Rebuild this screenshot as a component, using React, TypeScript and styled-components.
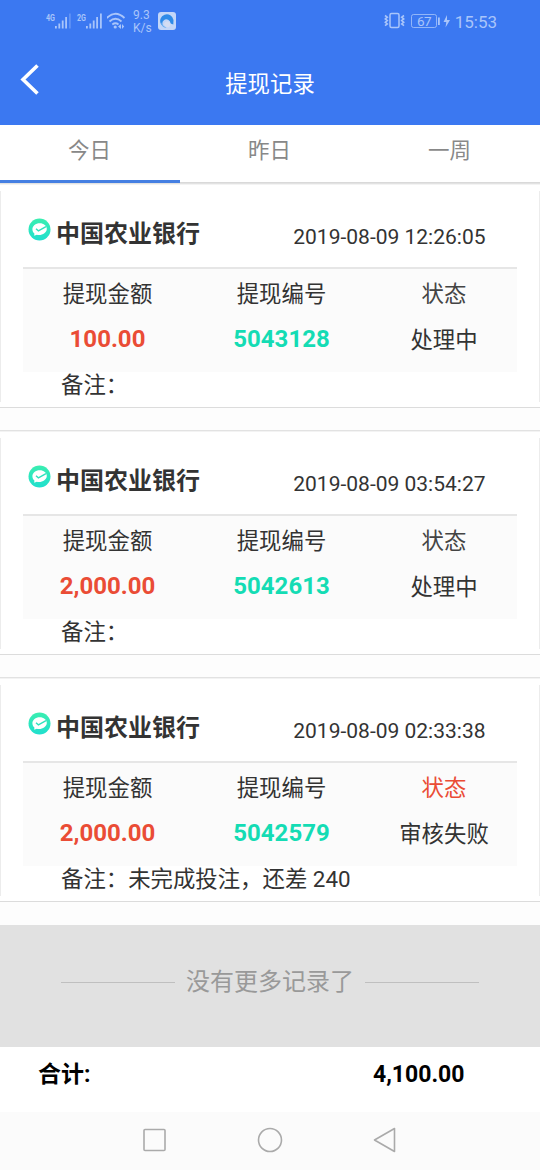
import React from 'react';
import styled, { createGlobalStyle } from 'styled-components';

const Global = createGlobalStyle`
  * { box-sizing: border-box; }
  body {
    margin: 0;
    background: #fdfdfd;
    color: #333;
    font-family: Roboto, "Noto Sans CJK SC", sans-serif;
  }
`;

const Screen = styled.div`
  display: flex;
  flex-direction: column;
  width: 540px;
  height: 1170px;
  overflow: hidden;
`;

const Header = styled.header`
  height: 125px;
  background: #3b78f1;
  color: #fff;
`;

const StatusBar = styled.div`
  display: flex;
  justify-content: space-between;
  height: 42px;
  padding: 0 43px 0 45px;
  color: #a9c5fa;
`;

const StatusGroup = styled.div`
  display: flex;
  align-items: center;
`;

const Speed = styled.div`
  width: 25px;
  padding-top: 2px;
  font-size: 12px;
  line-height: 13px;
`;

const Clock = styled.span`
  margin-left: 4px;
  padding-top: 1px;
  font-size: 17px;
  line-height: 20px;
`;

const TitleBar = styled.div`
  display: grid;
  grid-template-columns: 60px 1fr 60px;
  align-items: center;
  height: 83px;
`;

const BackButton = styled.button`
  width: 60px;
  height: 60px;
  padding: 0 0 9px 20px;
  border: 0;
  background: none;
  text-align: left;
  svg { display: block; }
`;

const Title = styled.h1`
  margin: 0;
  font-size: 22.4px;
  line-height: 32px;
  font-weight: 400;
  text-align: center;
`;

const Tabs = styled.nav`
  display: grid;
  grid-template-columns: repeat(3, 1fr);
  height: 59px;
  background: #fff;
`;

const Tab = styled.button<{ $active?: boolean }>`
  padding: 0 1px ${(p) => (p.$active ? '8px' : '10px')} 0;
  border: 0;
  border-bottom: ${(p) => (p.$active ? '3px solid #457fe2' : '2px solid #d9d9d9')};
  margin-bottom: ${(p) => (p.$active ? '1px' : '0')};
  background: none;
  color: #888;
  font: inherit;
  font-size: 21.5px;
`;

const Card = styled.article`
  height: 224px;
  margin-bottom: 23px;
  padding: 0 23px;
  border-top: 1px solid #f3f3f3;
  border-bottom: 1px solid #dcdcdc;
  background:
    linear-gradient(#ececec, #ececec) 0 6px / 1px 211px no-repeat,
    linear-gradient(#ececec, #ececec) 100% 6px / 1px 211px no-repeat,
    #fff;
  box-shadow: 0 -1px 0 #e2e2e2;
`;

const CardHead = styled.div`
  display: flex;
  align-items: center;
  height: 82px;
  padding: 13px 31.5px 0 5px;
`;

const BankIcon = styled.svg`
  margin: -7px 6px 0 0;
`;

const Bank = styled.strong`
  margin-left: -1px;
  padding-top: 2px;
  font-size: 24px;
  line-height: 34px;
  font-weight: 700;
`;

const Time = styled.time`
  margin-left: auto;
  padding-top: 8px;
  font-size: 21px;
  line-height: 28px;
`;

const Details = styled.div`
  display: grid;
  grid-template-columns: 169px 179px 146px;
  grid-template-rows: 49px 41px;
  align-items: center;
  height: 105px;
  border-top: 2px solid #e6e6e6;
  background: #fbfbfb;
  text-align: center;
`;

const Label = styled.span<{ $color?: string }>`
  padding-bottom: 3px;
  color: ${(p) => p.$color || '#333'};
  font-size: 22.4px;
`;

const Value = styled.span<{ $tone?: string }>`
  padding-bottom: ${(p) => (p.$tone ? '0' : '2px')};
  color: ${(p) => p.$tone || '#333'};
  font-size: ${(p) => (p.$tone ? '24px' : '22.4px')};
  font-weight: ${(p) => (p.$tone ? 700 : 400)};
`;

const Note = styled.p`
  margin: 0;
  padding: 1px 0 0 38px;
  font-size: 22.4px;
  line-height: 25px;
  white-space: pre;
`;

const EndOfList = styled.div`
  display: flex;
  justify-content: center;
  align-items: center;
  gap: 11px;
  height: 122px;
  padding-bottom: 13px;
  background: #e1e1e1;
  color: #999;
  font-size: 24px;
  &::before, &::after {
    content: '';
    width: 114px;
    height: 1px;
    margin-top: 6px;
    background: #bfbfbf;
  }
`;

const Total = styled.footer`
  display: flex;
  justify-content: space-between;
  height: 65px;
  padding: 11px 75.5px 0 38px;
  background: #fff;
  color: #000;
  font-size: 23px;
  line-height: 34px;
  font-weight: 700;
`;

const NavBar = styled.div`
  display: flex;
  flex: 1;
  justify-content: center;
  align-items: center;
  gap: 87px;
  padding-bottom: 2px;
  background: #fbfbfb;
`;

const records = [
  { id: '5043128', amount: '100.00', time: '2019-08-09 12:26:05', status: '处理中', note: '', failed: false },
  { id: '5042613', amount: '2,000.00', time: '2019-08-09 03:54:27', status: '处理中', note: '', failed: false },
  { id: '5042579', amount: '2,000.00', time: '2019-08-09 02:33:38', status: '审核失败', note: '未完成投注，还差 240', failed: true },
];

function Signal({ label, dimLast }: { label: string; dimLast?: boolean }) {
  return (
    <svg width="31" height="20" viewBox="0 0 31 20" fill="#a9c5fa">
      <text x="1" y="9.500" fontSize="9.500" fontWeight="700" textLength="9" lengthAdjust="spacingAndGlyphs">{label}</text>
      <rect x="10" y="15" width="1.800" height="2.500" />
      <rect x="13.400" y="12.500" width="1.800" height="5" />
      <rect x="16.800" y="9.500" width="1.800" height="8" />
      <rect x="20.200" y="6" width="1.800" height="11.500" />
      <rect x="24" y="2.500" width="1.800" height="15" opacity={dimLast ? 0.35 : 1} />
    </svg>
  );
}

function Wifi() {
  return (
    <svg width="26" height="20" viewBox="0 0 26 20" fill="none" stroke="#a9c5fa" strokeWidth="1.800">
      <path d="M-.3 7Q8.500 -1.500 17.500 7M2.500 10.500Q8.500 5 14.500 10.500M5.300 13.500Q8.500 11 11.500 13.500" />
      <circle cx="8.200" cy="16" r="1.600" fill="#a9c5fa" stroke="none" />
      <path d="M14 13v5l-3-2.500zM15 13v5l2.200-2.500z" fill="#a9c5fa" stroke="none" />
    </svg>
  );
}

function BrowserBadge() {
  return (
    <svg width="18" height="18" viewBox="0 0 18 18">
      <rect width="18" height="18" rx="3" fill="#c3d6f8" />
      <path d="M3.200 12.500A6.700 6.700 0 1 1 15.500 8L15.300 12.500L12.500 11.500A4 4 0 0 0 5.700 8.500Q3.700 10 4.500 13Z" fill="#2f8be8" />
      <path d="M4.300 9.500Q3.600 14 8.500 15.600Q4.800 16 3 12Z" fill="#6aaff0" />
      <path d="M6 12A3.500 3.500 0 0 1 12.300 11Q13 13.800 10.500 15.200Q7.200 15.500 6 12Z" fill="#d4ddf2" />
    </svg>
  );
}

function Vibrate() {
  return (
    <svg width="21" height="18" viewBox="0 0 21 18" fill="none" stroke="#a9c5fa">
      <rect x="6" y="1.500" width="9" height="14" rx="1.500" strokeWidth="1.500" />
      <path d="M1 3.500l2.300 1.700-2 1.700 2 1.700-2 1.700 2 1.700-2.300 1.700M20 3.500l-2.300 1.700 2 1.700-2 1.700 2 1.700-2 1.700 2.300 1.700" strokeWidth="1.600" />
    </svg>
  );
}

function Battery() {
  return (
    <svg width="46" height="18" viewBox="-5 0 46 18" fill="#a9c5fa">
      <rect x="1.500" y="2.500" width="25" height="13" rx="2" fill="none" stroke="#a9c5fa" strokeWidth="1" opacity=".8" />
      <text x="7" y="14" fontSize="13.500" textLength="14.500">67</text>
      <rect x="28" y="5.500" width="1.800" height="7.500" />
      <path d="M37 3L33.500 10H36.300L35.500 15.500L40 8H37Z" />
    </svg>
  );
}

function BankMark() {
  return (
    <BankIcon width="23" height="23" viewBox="0 0 23 23">
      <defs>
        <linearGradient id="mint" x1="0" y1="0" x2="0" y2="1">
          <stop offset="0" stopColor="#3aeeb0" />
          <stop offset="1" stopColor="#20dfce" />
        </linearGradient>
      </defs>
      <circle cx="11.500" cy="11.500" r="11" fill="url(#mint)" />
      <path d="M11.800 5.200C7.500 5.200 4.400 7.900 4.400 11.300C4.400 13.200 5.200 14.600 6.400 15.600L6.200 17.800L8.800 16.800C13.800 17.900 18.800 14.800 18.800 11C18.800 7.700 15.700 5.200 11.800 5.200Z" fill="#fff" />
      <path d="M8 10.800L10.400 12.800L18 8.600" fill="none" stroke="#2de2bd" strokeWidth="1.400" />
    </BankIcon>
  );
}

export default function App() {
  return (
    <Screen>
      <Global />
      <Header>
        <StatusBar>
          <StatusGroup>
            <Signal label="4G" dimLast />
            <Signal label="2G" />
            <Wifi />
            <Speed>9.3 K/s</Speed>
            <BrowserBadge />
          </StatusGroup>
          <StatusGroup>
            <Vibrate />
            <Battery />
            <Clock>15:53</Clock>
          </StatusGroup>
        </StatusBar>
        <TitleBar>
          <BackButton aria-label="返回">
            <svg width="20" height="31" viewBox="0 0 20 31" fill="none" stroke="#fff" strokeWidth="3.600">
              <path d="M17.500 1.500L3 15.500L17.500 29.500" />
            </svg>
          </BackButton>
          <Title>提现记录</Title>
        </TitleBar>
      </Header>
      <Tabs>
        <Tab $active>今日</Tab>
        <Tab>昨日</Tab>
        <Tab>一周</Tab>
      </Tabs>
      {records.map((r) => (
        <Card key={r.id}>
          <CardHead>
            <BankMark />
            <Bank>中国农业银行</Bank>
            <Time>{r.time}</Time>
          </CardHead>
          <Details>
            <Label>提现金额</Label>
            <Label>提现编号</Label>
            <Label $color={r.failed ? '#ea4c35' : '#444'}>状态</Label>
            <Value $tone="#ea4c35">{r.amount}</Value>
            <Value $tone="#14dcb4">{r.id}</Value>
            <Value>{r.status}</Value>
          </Details>
          <Note>备注：{r.note}</Note>
        </Card>
      ))}
      <EndOfList>没有更多记录了</EndOfList>
      <Total>
        <span>合计:</span>
        <span>4,100.00</span>
      </Total>
      <NavBar>
        <svg width="28" height="28" viewBox="0 0 28 28" fill="none" stroke="#aaa" strokeWidth="1.600">
          <rect x="3" y="3.500" width="21" height="21" rx="1" />
        </svg>
        <svg width="28" height="28" viewBox="0 0 28 28" fill="none" stroke="#aaa" strokeWidth="1.600">
          <circle cx="14" cy="14" r="11.500" />
        </svg>
        <svg width="28" height="28" viewBox="0 0 28 28" fill="none" stroke="#aaa" strokeWidth="1.600" strokeLinejoin="round">
          <path d="M23.500 2.500V25.500L3.500 14Z" />
        </svg>
      </NavBar>
    </Screen>
  );
}
